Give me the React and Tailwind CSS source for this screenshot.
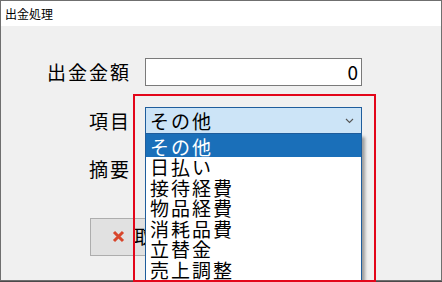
import React from 'react';

const items = ['その他', '日払い', '接待経費', '物品経費', '消耗品費', '立替金', '売上調整'];

const font = { fontFamily: '"Noto Sans CJK JP", "Noto Sans", sans-serif' };

const ComboBox = () => (
  <div className="relative w-[217px] h-[27px]">
    <div className="flex items-center justify-between h-full bg-[#cce4f7] border border-[#1f5d9c] pl-[4px] pr-[7px]">
      <span className="text-[19px] tracking-[2px] leading-none">その他</span>
      <svg width="9" height="6" viewBox="0 0 9 6" className="mt-[1px]">
        <path d="M1 1 L4.5 4.5 L8 1" fill="none" stroke="#555" strokeWidth="1.1" />
      </svg>
    </div>
    {/* open dropdown list */}
    <div className="absolute left-0 top-[27px] w-[217px] bg-white border-x border-[#1f5d9c] shadow-[3px_3px_3px_rgba(0,0,0,0.35)] z-10">
      {items.map((item, i) => (
        <div
          key={item}
          className={
            i === 0
              ? 'h-[23px] bg-[#1a6fb9] text-white pl-[4px] pt-[3px] text-[19px] tracking-[2px] leading-[19px]'
              : 'h-[20.5px] pl-[4px] text-[19px] tracking-[2px] leading-[20.5px]'
          }
        >
          {item}
        </div>
      ))}
    </div>
  </div>
);

export default function App() {
  return (
    <div className="relative w-[442px] h-[282px] bg-[#4a4a4a] overflow-hidden text-black" style={font}>
      <div className="w-[442px] h-[281px] border border-[#6f6f6f] bg-[#f0f0f0] flex flex-col overflow-hidden">
        <div className="h-[25px] bg-white flex items-center pl-[4px] text-[12px] shrink-0">出金処理</div>

        <div className="flex flex-col pt-[32px]">
          <div className="grid grid-cols-[130px_217px] gap-x-[14px] gap-y-[20px] items-center">
            <div className="text-right text-[19px] tracking-[2px]">出金金額</div>
            <div className="h-[28px] bg-white border border-[#7a7a7a] flex items-center justify-end pr-[3px] text-[19px]">0</div>

            <div className="text-right text-[19px] tracking-[2px]">項目</div>
            <ComboBox />

            <div className="text-right text-[19px] tracking-[2px]">摘要</div>
            <div className="h-[28px] bg-white border border-[#7a7a7a]"></div>
          </div>

          <div className="pl-[89px] mt-[34px]">
            <button className="w-[120px] h-[38px] bg-[#e1e1e1] border border-[#adadad] flex items-center pl-[21px] gap-[9px]">
              <svg width="13" height="13" viewBox="0 0 13 13">
                <path d="M2 2 L11 11 M11 2 L2 11" stroke="#d8462c" strokeWidth="3" strokeLinecap="butt" />
              </svg>
              <span className="text-[19px] tracking-[2px]">取消</span>
            </button>
          </div>
        </div>
      </div>

      {/* red highlight frame */}
      <div className="absolute left-[133px] top-[94px] w-[243px] h-[188px] border-2 border-[#e3061a] z-20 pointer-events-none"></div>
    </div>
  );
}
